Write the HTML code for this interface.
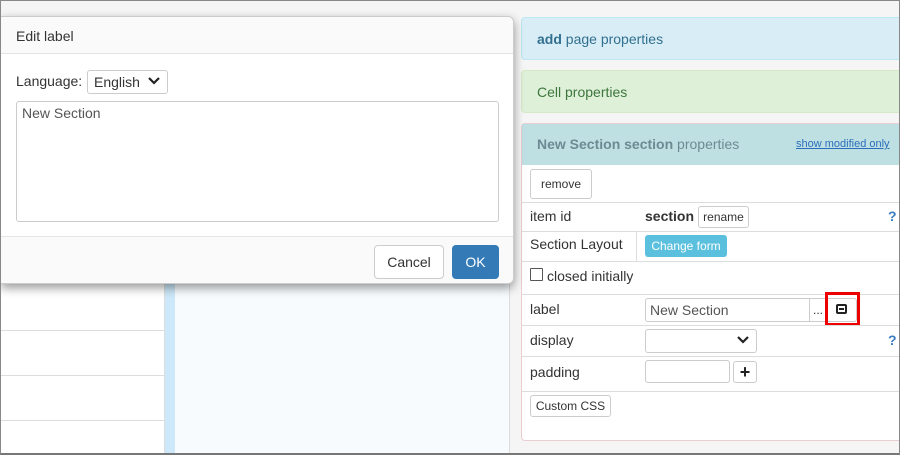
<!DOCTYPE html>
<html><head><style>
*{box-sizing:border-box;margin:0;padding:0}
body{width:900px;height:455px;overflow:hidden;font-family:"Liberation Sans",sans-serif;font-size:14px;color:#333;background:#f5f5f5;position:relative}
.a{position:absolute}
.frame{left:0;top:0;width:900px;height:455px;border:1px solid #888;border-bottom:2px solid #777;z-index:50;pointer-events:none}
.btn{position:absolute;border:1px solid #ccc;border-radius:3px;background:#fff;font-size:12px;text-align:center}
.hr{position:absolute;left:522px;width:378px;height:1px;background:#ddd}
</style></head><body>
<div class="a frame"></div>
<!-- left column -->
<div class="a" style="left:0;top:16px;width:165px;height:439px;background:#fff;border-right:1px solid #ddd"></div>
<div class="a" style="left:0;top:330px;width:165px;height:1px;background:#ddd"></div>
<div class="a" style="left:0;top:375px;width:165px;height:1px;background:#ddd"></div>
<div class="a" style="left:0;top:420px;width:165px;height:1px;background:#ddd"></div>
<div class="a" style="left:165px;top:16px;width:10px;height:439px;background:#cde8f9"></div>
<div class="a" style="left:175px;top:16px;width:335px;height:439px;background:#f7fbfe;border-right:1px solid #ddd"></div>

<!-- right panels -->
<div class="a" style="left:521px;top:17px;width:385px;height:43px;background:#d9edf7;border:1px solid #bce8f1;border-radius:4px;color:#31708f;font-size:14px;padding:13px 15px"><b>add</b> page properties</div>
<div class="a" style="left:521px;top:70px;width:385px;height:43px;background:#dff0d8;border:1px solid #d6e9c6;border-radius:4px;color:#3c763d;font-size:14px;padding:13px 15px">Cell properties</div>
<div class="a" style="left:521px;top:123px;width:385px;height:318px;background:#fff;border:1px solid #ebccd1;border-radius:4px"></div>
<div class="a" style="left:522px;top:124px;width:378px;height:41px;background:#bfe0e3;color:#6c8a93;padding:12px 15px"><b>New Section section</b> properties</div>
<div class="a" style="left:796px;top:138px;font-size:11px;color:#2a6ebb;text-decoration:underline">show modified only</div>

<div class="btn" style="left:530px;top:169px;width:62px;height:30px;line-height:28px">remove</div>
<div class="hr" style="top:202px"></div>
<div class="a" style="left:530px;top:208px">item id</div>
<div class="a" style="left:645px;top:208px;font-weight:bold">section</div>
<div class="btn" style="left:698px;top:206px;width:51px;height:22px;line-height:20px">rename</div>
<div class="a" style="left:888px;top:208px;color:#3a7cc1;font-weight:bold">?</div>
<div class="hr" style="top:231px"></div>
<div class="a" style="left:530px;top:236px">Section Layout</div>
<div class="a" style="left:636px;top:231px;width:1px;height:30px;background:#ddd"></div>
<div class="a" style="left:645px;top:235px;width:82px;height:22px;background:#5bc0de;border-radius:3px;color:#fff;font-size:12px;line-height:22px;text-align:center">Change form</div>
<div class="hr" style="top:261px"></div>
<div class="a" style="left:530px;top:268px;width:13px;height:13px;border:1px solid #555;border-radius:1px"></div>
<div class="a" style="left:547px;top:268px">closed initially</div>
<div class="hr" style="top:294px"></div>
<div class="a" style="left:530px;top:301px">label</div>
<div class="a" style="left:645px;top:298px;width:165px;height:24px;border:1px solid #ccc;border-radius:3px 0 0 3px;padding:3px 4px;color:#555">New Section</div>
<div class="a" style="left:810px;top:298px;width:17px;height:24px;border:1px solid #ccc;border-left:0;font-size:12px;text-align:center;line-height:22px">...</div>
<div class="a" style="left:827px;top:298px;width:30px;height:24px;border:1px solid #ccc;border-left:0;border-radius:0 3px 3px 0"></div>
<div class="a" style="left:825px;top:292px;width:35px;height:34px;border:3px solid #e00"></div>
<div class="a" style="left:836px;top:304px;width:11px;height:10px;border:2px solid #222;border-radius:2px"></div>
<div class="a" style="left:839px;top:308px;width:5px;height:2px;background:#222"></div>
<div class="hr" style="top:325px"></div>
<div class="a" style="left:530px;top:332px">display</div>
<div class="a" style="left:645px;top:329px;width:112px;height:24px;border:1px solid #ccc;border-radius:3px"></div>
<svg class="a" style="left:736px;top:335px" width="14" height="10"><path d="M2 2l5 5 5-5" stroke="#222" stroke-width="2.2" fill="none"/></svg>
<div class="a" style="left:888px;top:332px;color:#3a7cc1;font-weight:bold">?</div>
<div class="hr" style="top:356px"></div>
<div class="a" style="left:530px;top:364px">padding</div>
<div class="a" style="left:645px;top:360px;width:85px;height:23px;border:1px solid #ccc;border-radius:3px"></div>
<div class="a" style="left:733px;top:361px;width:24px;height:22px;border:1px solid #ccc;border-radius:3px;text-align:center;font-weight:bold;font-size:18px;line-height:20px;color:#222">+</div>
<div class="hr" style="top:391px"></div>
<div class="btn" style="left:530px;top:395px;width:81px;height:22px;line-height:20px">Custom CSS</div>

<!-- dialog -->
<div class="a" style="left:1px;top:16px;width:513px;height:268px;background:#fff;border:1px solid #ccc;border-left:0;border-radius:0 6px 6px 0;box-shadow:0 4px 10px rgba(0,0,0,.4);overflow:hidden;z-index:10">
 <div class="a" style="left:0;top:0;width:513px;height:37px;background:#fafafa;border-bottom:1px solid #e5e5e5;padding:11px 15px">Edit label</div>
 <div class="a" style="left:15px;top:56px">Language:</div>
 <div class="a" style="left:86px;top:53px;width:81px;height:24px;border:1px solid #ccc;border-radius:3px;padding:3px 6px">English</div>
 <svg class="a" style="left:146px;top:59px" width="14" height="10"><path d="M2 2l5 5 5-5" stroke="#222" stroke-width="2.2" fill="none"/></svg>
 <div class="a" style="left:15px;top:84px;width:483px;height:121px;border:1px solid #ccc;border-radius:3px;padding:3px 5px;color:#555">New Section</div>
 <div class="a" style="left:0;top:219px;width:513px;height:50px;background:#fafafa;border-top:1px solid #e5e5e5"></div>
 <div class="a" style="left:373px;top:228px;width:70px;height:34px;border:1px solid #ccc;border-radius:4px;background:#fff;text-align:center;line-height:32px">Cancel</div>
 <div class="a" style="left:451px;top:228px;width:47px;height:34px;border-radius:4px;background:#337ab7;color:#fff;text-align:center;line-height:34px">OK</div>
</div>
</body></html>
